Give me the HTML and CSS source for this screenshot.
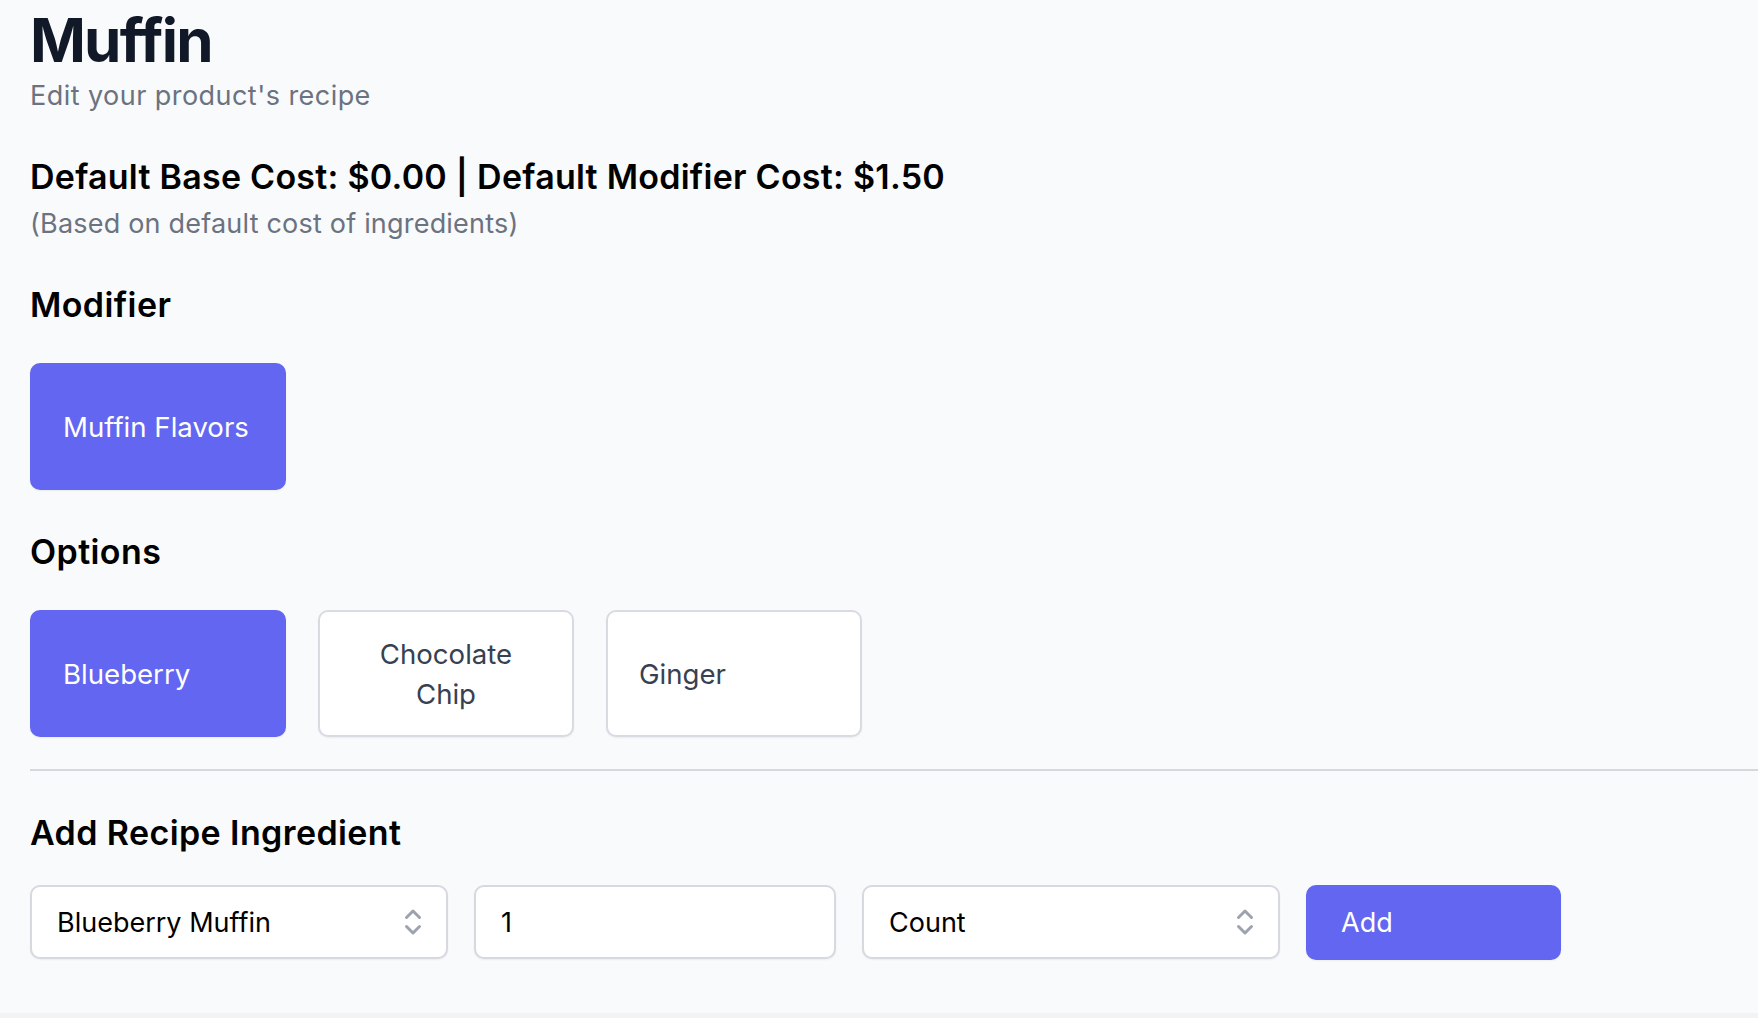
FILE: index.html
```html
<!DOCTYPE html>
<html lang="en">
<head>
<meta charset="utf-8">
<title>Muffin – Recipe</title>
<link rel="stylesheet" href="styles.css">
</head>
<body>
<main class="page">
  <header class="head">
    <h1 class="title">Muffin</h1>
    <p class="subtitle">Edit your product's recipe</p>
  </header>

  <section class="cost">
    <h2 class="cost-title">Default Base Cost: $0.00 | Default Modifier Cost: $1.50</h2>
    <p class="cost-note">(Based on default cost of ingredients)</p>
  </section>

  <section class="group group--first">
    <h3 class="group-title">Modifier</h3>
    <div class="choices">
      <button class="choice choice--active" type="button">Muffin Flavors</button>
    </div>
  </section>

  <section class="group">
    <h3 class="group-title">Options</h3>
    <div class="choices">
      <button class="choice choice--active" type="button">Blueberry</button>
      <button class="choice" type="button">Chocolate Chip</button>
      <button class="choice" type="button">Ginger</button>
    </div>
  </section>

  <hr class="divider">

  <section class="add">
    <h3 class="group-title">Add Recipe Ingredient</h3>
    <form class="add-row">
      <div class="field field--select field--wide">
        <select class="control">
          <option>Blueberry Muffin</option>
        </select>
        <svg class="chevrons" viewBox="0 0 18 30" aria-hidden="true"><path d="M2.5 10.5 L9 4 L15.5 10.5 M2.5 19.5 L9 26 L15.5 19.5" fill="none" stroke="#9ca3af" stroke-width="3" stroke-linecap="round" stroke-linejoin="round"/></svg>
      </div>
      <div class="field field--qty">
        <input class="control" type="text" value="1">
      </div>
      <div class="field field--select field--wide">
        <select class="control">
          <option>Count</option>
        </select>
        <svg class="chevrons" viewBox="0 0 18 30" aria-hidden="true"><path d="M2.5 10.5 L9 4 L15.5 10.5 M2.5 19.5 L9 26 L15.5 19.5" fill="none" stroke="#9ca3af" stroke-width="3" stroke-linecap="round" stroke-linejoin="round"/></svg>
      </div>
      <button class="add-btn" type="button">Add</button>
    </form>
  </section>
</main>
</body>
</html>
```

FILE: styles.css
```css
* { box-sizing: border-box; }

html, body {
  margin: 0;
  padding: 0;
}

body {
  background: #f2f3f5;
  font-family: Inter, "Noto Sans", "Liberation Sans", sans-serif;
  color: #000;
}

.page {
  background: #f9fafb;
  min-height: 1013px;
  padding: 10px 0 0 30px;
}

.title {
  margin: 0;
  font-size: 60px;
  line-height: 60px;
  font-weight: 700;
  color: #111827;
  letter-spacing: -1.8px;
}

.subtitle {
  margin: 10px 0 0;
  font-size: 27px;
  line-height: 32px;
  letter-spacing: 0.45px;
  color: #6b7280;
}

.cost {
  margin-top: 45px;
}

.cost-title {
  margin: 0;
  font-size: 34px;
  line-height: 40px;
  font-weight: 600;
  letter-spacing: 0.25px;
  color: #000;
}

.cost-note {
  margin: 11px 0 0;
  font-size: 27px;
  line-height: 32px;
  letter-spacing: 0.2px;
  color: #6b7280;
}

.group--first {
  margin-top: 45px;
}

.group + .group {
  margin-top: 42px;
}

.group-title {
  margin: 0;
  font-size: 34px;
  line-height: 40px;
  font-weight: 600;
  letter-spacing: 0.4px;
  color: #000;
}

.choices {
  display: flex;
  gap: 32px;
  margin-top: 38px;
}

.choice {
  display: flex;
  align-items: center;
  width: 256px;
  height: 127px;
  padding: 0 31px;
  border: 2px solid #d8dbe1;
  border-radius: 10px;
  background: #fff;
  color: #374151;
  font-family: inherit;
  font-size: 27.6px;
  line-height: 40px;
  text-align: center;
  box-shadow: 0 1px 2px rgba(0, 0, 0, 0.06);
  cursor: pointer;
}

.choice--active {
  background: #6366f1;
  border-color: #6366f1;
  color: #fff;
}

.divider {
  margin: 32px 0 0;
  border: 0;
  height: 2px;
  background: #d6d8de;
}

.add {
  margin-top: 42px;
}

.add-row {
  display: flex;
  gap: 26px;
  margin: 32px 0 0;
}

.field {
  position: relative;
  height: 74px;
}

.field--wide { width: 418px; }
.field--qty { width: 362px; }

.control {
  width: 100%;
  height: 100%;
  margin: 0;
  padding: 0 60px 0 25px;
  border: 2px solid #d6d9df;
  border-radius: 10px;
  background: #fff;
  color: #000;
  font-family: inherit;
  font-size: 27px;
  box-shadow: 0 1px 2px rgba(0, 0, 0, 0.06);
  appearance: none;
  -webkit-appearance: none;
  outline: none;
}

.chevrons {
  position: absolute;
  right: 26px;
  top: 22px;
  width: 18px;
  height: 30px;
  pointer-events: none;
}

.add-btn {
  width: 255px;
  height: 75px;
  padding: 0 35px;
  border: 0;
  border-radius: 10px;
  background: #6366f1;
  color: #fff;
  font-family: inherit;
  font-size: 27px;
  text-align: left;
  box-shadow: 0 1px 2px rgba(0, 0, 0, 0.05);
  cursor: pointer;
}
```
